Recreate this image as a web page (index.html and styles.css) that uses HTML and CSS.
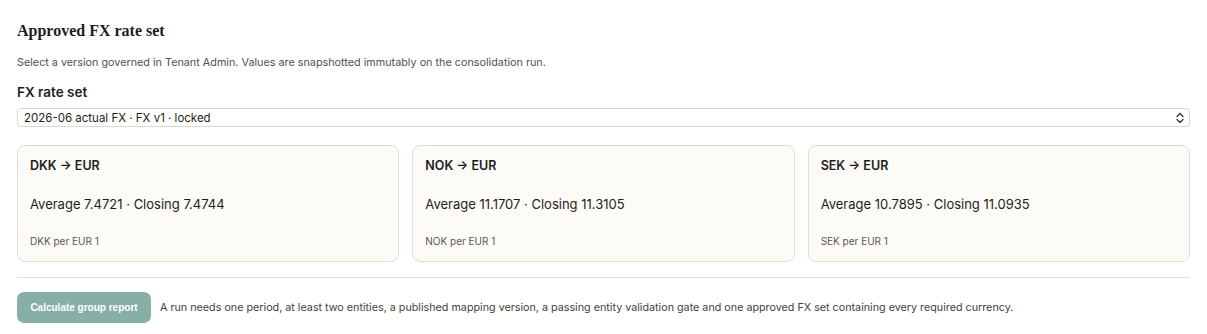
FILE: index.html
```html
<!DOCTYPE html>
<html lang="en">
<head>
  <meta charset="UTF-8">
  <meta name="viewport" content="width=device-width, initial-scale=1">
  <title>Approved FX rate set</title>
  <link rel="stylesheet" href="styles.css">
</head>
<body>
  <section class="fx-panel">
    <h2 class="fx-title">Approved FX rate set</h2>
    <p class="fx-desc">Select a version governed in Tenant Admin. Values are snapshotted immutably on the consolidation run.</p>

    <label class="fx-label" for="fxSet">FX rate set</label>
    <div class="select-wrap">
      <select id="fxSet" class="fx-select">
        <option>2026-06 actual FX · FX v1 · locked</option>
      </select>
      <svg class="select-arrows" width="8" height="12" viewBox="0 0 8 12" fill="none" stroke="#333" stroke-width="1.3" stroke-linecap="round" stroke-linejoin="round">
        <path d="M1 4.5 L4 1.5 L7 4.5"/>
        <path d="M1 7.5 L4 10.5 L7 7.5"/>
      </svg>
    </div>

    <div class="rate-grid">
      <div class="rate-card">
        <div class="rate-pair">DKK → EUR</div>
        <div class="rate-values">Average 7.4721 · Closing 7.4744</div>
        <div class="rate-unit">DKK per EUR 1</div>
      </div>
      <div class="rate-card">
        <div class="rate-pair">NOK → EUR</div>
        <div class="rate-values">Average 11.1707 · Closing 11.3105</div>
        <div class="rate-unit">NOK per EUR 1</div>
      </div>
      <div class="rate-card">
        <div class="rate-pair">SEK → EUR</div>
        <div class="rate-values">Average 10.7895 · Closing 11.0935</div>
        <div class="rate-unit">SEK per EUR 1</div>
      </div>
    </div>

    <hr class="divider">

    <div class="run-row">
      <button class="run-btn" disabled>Calculate group report</button>
      <span class="run-note">A run needs one period, at least two entities, a published mapping version, a passing entity validation gate and one approved FX set containing every required currency.</span>
    </div>
  </section>
</body>
</html>
```

FILE: styles.css
```css
body {
  margin: 0;
  padding: 0;
  background: #fff;
  color: #1f1d1a;
  font-family: Inter, "Noto Sans", sans-serif;
}
.fx-panel {
  padding: 21px 17px 0 17px;
}
.fx-title {
  font-family: "Liberation Serif", serif;
  font-size: 16px;
  font-weight: bold;
  margin: 0;
  line-height: 20px;
}
.fx-desc {
  font-size: 10.8px;
  color: #555049;
  margin: 15px 0 0 0;
  line-height: 14px;
}
.fx-label {
  display: block;
  font-size: 13.5px;
  font-weight: 600;
  margin-top: 13px;
  line-height: 18px;
}
.select-wrap {
  position: relative;
  margin-top: 7px;
}
.fx-select {
  appearance: none;
  -webkit-appearance: none;
  display: block;
  width: 100%;
  height: 19px;
  padding: 0 6px;
  font-family: Inter, "Noto Sans", sans-serif;
  font-size: 11.5px;
  color: #1f1d1a;
  background: #fff;
  border: 1px solid #e2d8c4;
  border-radius: 4px;
}
.select-arrows {
  position: absolute;
  right: 6px;
  top: 4px;
  pointer-events: none;
}
.rate-grid {
  display: grid;
  grid-template-columns: repeat(3, 1fr);
  gap: 13px;
  margin-top: 18px;
}
.rate-card {
  background: #fcfbf7;
  border: 1px solid #e6ddcb;
  border-radius: 8px;
  height: 117px;
  box-sizing: border-box;
  padding: 12px 12px 0 12px;
}
.rate-pair {
  font-size: 12.5px;
  font-weight: 600;
  line-height: 16px;
}
.rate-values {
  font-size: 13px;
  margin-top: 21px;
  line-height: 18px;
}
.rate-unit {
  font-size: 10px;
  color: #5c5750;
  margin-top: 22px;
  line-height: 13px;
}
.divider {
  border: none;
  border-top: 1px solid #e3ddd3;
  margin: 15px 0 0 0;
}
.run-row {
  display: flex;
  align-items: center;
  gap: 9px;
  margin-top: 14px;
}
.run-btn {
  flex: none;
  width: 134px;
  height: 31px;
  background: #86afa6;
  color: #fff;
  border: none;
  border-radius: 7px;
  font-family: "Liberation Sans", Arial, sans-serif;
  font-size: 10px;
  font-weight: bold;
}
.run-note {
  font-size: 10.75px;
  color: #45413b;
}
```
